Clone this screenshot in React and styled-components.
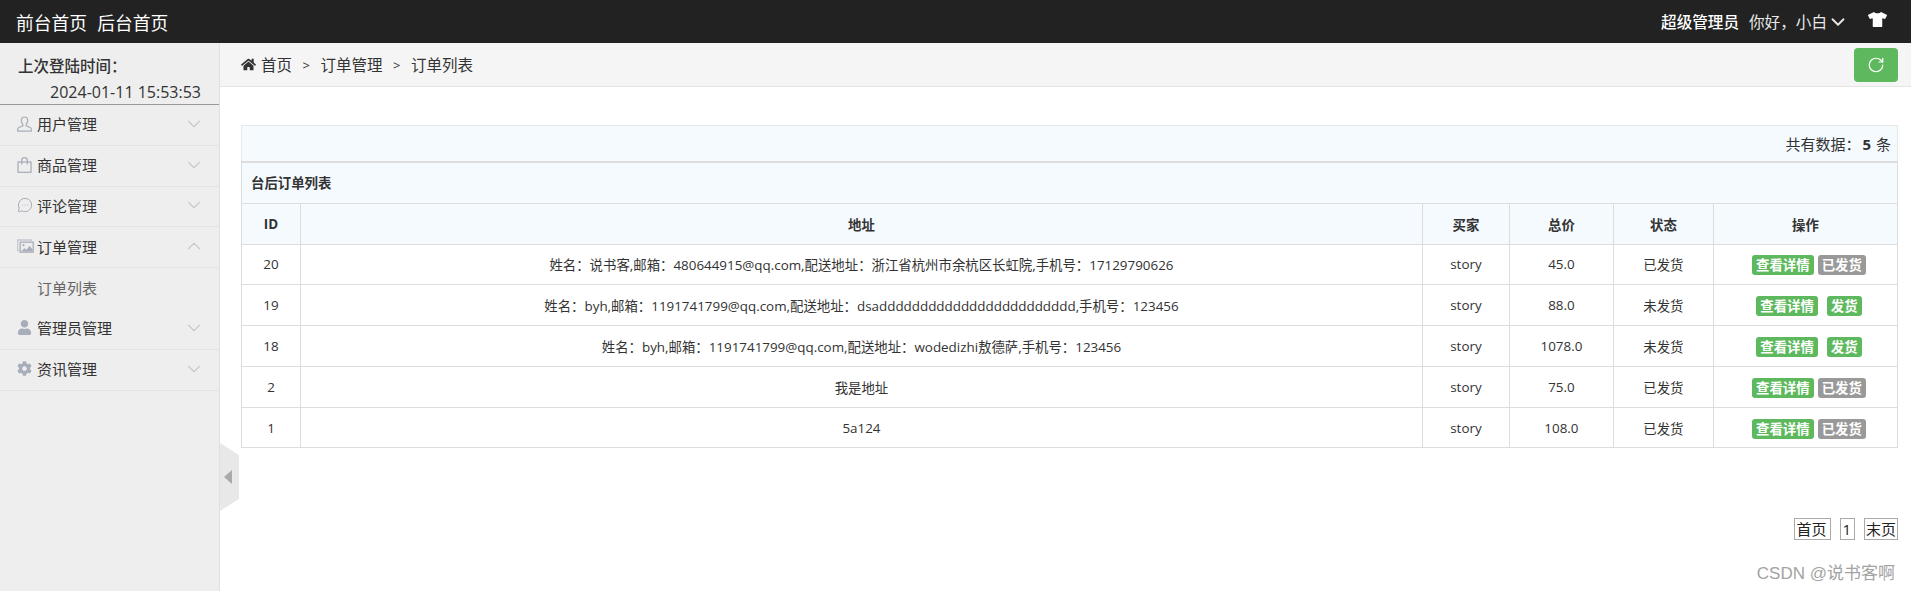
import styled, { createGlobalStyle } from "styled-components";
import { ChevronDown, ChevronUp, MessageCircleMore, RotateCw } from "lucide-react";
import { FaCog, FaHome, FaTshirt, FaUser } from "react-icons/fa";

const GlobalStyle = createGlobalStyle`
  html, body {
    margin: 0;
    padding: 0;
    background: #fff;
    color: #333;
    font-family: "Open Sans", "Noto Sans CJK SC", sans-serif;
    font-size: 13.4px;
  }
  * {
    box-sizing: border-box;
  }
`;

const Page = styled.div`
  position: relative;
  width: 100%;
  height: 591px;
  overflow: hidden;
  display: flex;
  flex-direction: column;
`;

const TopBar = styled.header`
  flex: 0 0 43px;
  display: flex;
  align-items: center;
  justify-content: space-between;
  padding: 0 24px 0 16px;
  background: #222;
  color: #fff;
`;

const TopLinks = styled.nav`
  display: flex;
  gap: 10px;
  font-size: 17.8px;
`;

const TopUser = styled.div`
  display: flex;
  align-items: center;
  font-size: 15.6px;
`;

const Role = styled.span`
  margin-right: 10px;
  font-weight: 500;
`;

const Hello = styled.span`
  color: #e8e8e8;
`;

const UserChevron = styled(ChevronDown)`
  margin: 1px 0 0 0;
  color: #e8e8e8;
`;

const Shirt = styled(FaTshirt)`
  margin: -4px 0 0 19px;
  color: #fff;
`;

const Body = styled.div`
  flex: 1;
  display: flex;
  min-height: 0;
`;

const Sidebar = styled.aside`
  flex: 0 0 220px;
  background: #eee;
  border-right: 1px solid #e0e0e0;
`;

const LoginInfo = styled.div`
  height: 62px;
  padding: 11px 18px 0 18px;
  border-bottom: 1px solid #999;
`;

const LoginLabel = styled.div`
  font-size: 15.5px;
  font-weight: 500;
  line-height: 25px;
`;

const LoginTime = styled.div`
  text-align: right;
  font-size: 16px;
  line-height: 26px;
`;

const MenuRow = styled.div`
  height: 40.8px;
  display: flex;
  align-items: center;
  padding: 0 14px 2px 17px;
  border-bottom: 1px solid #e3e3e3;
  font-size: 15px;
  color: #333;
`;

const MenuIcon = styled.span`
  flex: 0 0 20px;
  display: flex;
  align-items: center;
  color: #a8aeb9;
`;

const MenuText = styled.span`
  flex: 1;
`;

const Chevron = styled.span`
  display: flex;
  color: #c8c8c8;
`;

const SubRow = styled.div`
  height: 40.8px;
  padding-left: 37px;
  line-height: 40px;
  font-size: 15px;
  color: #666;
`;

const Collapse = styled.div`
  position: absolute;
  left: 220px;
  top: 443px;
  width: 19px;
  height: 68px;
  display: flex;
  align-items: center;
  justify-content: center;
  background: #e8e8e8;
  clip-path: polygon(0 0, 100% 12px, 100% 56px, 0 100%);

  &::before {
    content: "";
    margin-left: -4px;
    border-style: solid;
    border-width: 7px 8px 7px 0;
    border-color: transparent #aaa transparent transparent;
  }
`;

const Main = styled.main`
  flex: 1;
  min-width: 0;
  display: flex;
  flex-direction: column;
`;

const Breadcrumb = styled.div`
  flex: 0 0 44px;
  display: flex;
  align-items: center;
  justify-content: space-between;
  padding: 0 13px 0 21px;
  background: #f5f5f5;
  border-bottom: 1px solid #e5e5e5;
`;

const Trail = styled.div`
  display: flex;
  align-items: center;
  font-size: 15.5px;
  color: #333;
`;

const HomeIcon = styled(FaHome)`
  margin: -1px 5px 0 0;
  color: #333;
`;

const TrailSep = styled.span`
  margin: 0 10.5px;
  font-size: 13px;
`;

const RefreshButton = styled.button`
  width: 44px;
  height: 34px;
  margin-top: 1px;
  padding: 0;
  display: flex;
  align-items: center;
  justify-content: center;
  border: 0;
  border-radius: 4px;
  background: #5eb95e;
  color: #fff;
`;

const Content = styled.div`
  flex: 1;
  padding: 38px 13px 0 21px;
`;

const SummaryBar = styled.div`
  height: 36px;
  padding-right: 6px;
  display: flex;
  align-items: center;
  justify-content: flex-end;
  background: #f5fafe;
  border: 1px solid #e8e8e8;
  border-bottom: 0;
  font-size: 15px;
`;

const Strong = styled.strong`
  margin: 0 5px 0 2px;
`;

const OrdersTable = styled.table`
  width: 100%;
  table-layout: fixed;
  border-collapse: collapse;
  border: 1px solid #ddd;
`;

const TitleCell = styled.th`
  height: 41px;
  padding: 0 9px 2px;
  text-align: left;
  font-weight: 700;
  background: #f5fafe;
  border: 1px solid #ddd;
  border-top-width: 2px;
`;

const HeadCell = styled.th`
  height: 41px;
  padding: 0;
  text-align: center;
  font-weight: 700;
  background: #f5fafe;
  border: 1px solid #ddd;
`;

const Cell = styled.td`
  height: 40.8px;
  padding: 0;
  text-align: center;
  border: 1px solid #ddd;
`;

const Actions = styled.div`
  display: flex;
  justify-content: center;
  gap: ${(props) => props.$gap}px;
  padding-left: 7px;
  margin-top: 2px;
`;

const Tag = styled.span`
  height: 20px;
  padding: 0 4px;
  border-radius: 3px;
  background: ${(props) => (props.$muted ? "#999" : "#5eb95e")};
  color: #fff;
  font-size: 13.4px;
  font-weight: 700;
  line-height: 20px;
`;

const Pager = styled.div`
  display: flex;
  justify-content: flex-end;
  gap: 9px;
  margin-top: 70px;
`;

const PageLink = styled.a`
  height: 22px;
  padding: 0 ${(props) => props.$extra || 1}px 0 1px;
  border: 1px solid #aaa;
  color: #222;
  font-size: 15px;
  line-height: 20px;
`;

const Watermark = styled.div`
  position: absolute;
  right: 16px;
  bottom: 7px;
  color: #a3a3a3;
  font-family: "Liberation Sans", "Noto Sans CJK SC", sans-serif;
  font-size: 17px;
`;

// outlined head and shoulders
const BustIcon = () => (
  <svg width="15" height="16" viewBox="0 0 15 16" fill="none" stroke="currentColor" strokeWidth="1.2">
    <path d="M7.5 1C5.4 1 4.3 2.6 4.3 4.6c0 1.6.6 3 1.6 3.9v1.3L1.9 11.5c-.8.4-1.2 1-1.2 1.8v1.9h13.6v-1.9c0-.8-.4-1.4-1.2-1.8L9.100 9.800V8.500c1-.9 1.600-2.300 1.600-3.900C10.700 2.600 9.600 1 7.500 1z" />
  </svg>
);

// bag with the handle standing above the body
const BagIcon = () => (
  <svg width="15" height="16" viewBox="0 0 15 16" fill="none" stroke="currentColor" strokeWidth="1.3">
    <rect x="1" y="5" width="13" height="10.300" />
    <path d="M4.700 7.500V3.500a2.800 2.800 0 0 1 5.600 0v4" />
  </svg>
);

// picture frame with a second frame peeking out behind it
const PictureIcon = () => (
  <svg width="17" height="14" viewBox="0 0 17 14" fill="none">
    <path d="M2.500 11.500H.7V1H14v1.500" stroke="#c4c8cf" strokeWidth="1.300" />
    <rect x="3.200" y="3.200" width="13" height="10" stroke="currentColor" strokeWidth="1.300" />
    <circle cx="6.500" cy="6.200" r="1.100" fill="currentColor" />
    <path d="M4 12.500l3.500-3.300 1.800 1.500 3.200-3.700 3 3.200v2.300z" fill="currentColor" />
  </svg>
);

const menu = [
  { label: "用户管理", icon: <BustIcon /> },
  { label: "商品管理", icon: <BagIcon /> },
  { label: "评论管理", icon: <MessageCircleMore size={16} strokeWidth={1.5} /> },
  {
    label: "订单管理",
    icon: <PictureIcon />,
    open: true,
    children: ["订单列表"],
  },
  { label: "管理员管理", icon: <FaUser size={15} /> },
  { label: "资讯管理", icon: <FaCog size={15} /> },
];

const orders = [
  {
    id: 20,
    address: "姓名：说书客,邮箱：480644915@qq.com,配送地址：浙江省杭州市余杭区长虹院,手机号：17129790626",
    total: "45.0",
    shipped: true,
  },
  {
    id: 19,
    address: "姓名：byh,邮箱：1191741799@qq.com,配送地址：dsadddddddddddddddddddddddd,手机号：123456",
    total: "88.0",
    shipped: false,
  },
  {
    id: 18,
    address: "姓名：byh,邮箱：1191741799@qq.com,配送地址：wodedizhi敖德萨,手机号：123456",
    total: "1078.0",
    shipped: false,
  },
  { id: 2, address: "我是地址", total: "75.0", shipped: true },
  { id: 1, address: "5a124", total: "108.0", shipped: true },
];

const columns = [
  { label: "ID", width: 59 },
  { label: "地址" },
  { label: "买家", width: 87 },
  { label: "总价", width: 104 },
  { label: "状态", width: 100 },
  { label: "操作", width: 184 },
];

const App = () => (
  <Page>
    <GlobalStyle />
    <TopBar>
      <TopLinks>
        <span>前台首页</span>
        <span>后台首页</span>
      </TopLinks>
      <TopUser>
        <Role>超级管理员</Role>
        <Hello>你好，小白</Hello>
        <UserChevron size={22} strokeWidth={2} />
        <Shirt size={19} />
      </TopUser>
    </TopBar>
    <Body>
      <Sidebar>
        <LoginInfo>
          <LoginLabel>上次登陆时间：</LoginLabel>
          <LoginTime>2024-01-11 15:53:53</LoginTime>
        </LoginInfo>
        {menu.map((item) => (
          <div key={item.label}>
            <MenuRow>
              <MenuIcon>{item.icon}</MenuIcon>
              <MenuText>{item.label}</MenuText>
              <Chevron>
                {item.open ? (
                  <ChevronUp size={22} strokeWidth={1.2} />
                ) : (
                  <ChevronDown size={22} strokeWidth={1.2} />
                )}
              </Chevron>
            </MenuRow>
            {item.children?.map((child) => (
              <SubRow key={child}>{child}</SubRow>
            ))}
          </div>
        ))}
      </Sidebar>
      <Main>
        <Breadcrumb>
          <Trail>
            <HomeIcon size={15} />
            首页
            <TrailSep>&gt;</TrailSep>
            订单管理
            <TrailSep>&gt;</TrailSep>
            订单列表
          </Trail>
          <RefreshButton type="button" aria-label="刷新">
            <RotateCw size={18} strokeWidth={1.6} />
          </RefreshButton>
        </Breadcrumb>
        <Content>
          <SummaryBar>
            共有数据：<Strong>5</Strong> 条
          </SummaryBar>
          <OrdersTable>
            <colgroup>
              {columns.map((col) => (
                <col key={col.label} style={col.width ? { width: col.width } : undefined} />
              ))}
            </colgroup>
            <thead>
              <tr>
                <TitleCell colSpan={6}>台后订单列表</TitleCell>
              </tr>
              <tr>
                {columns.map((col) => (
                  <HeadCell key={col.label}>{col.label}</HeadCell>
                ))}
              </tr>
            </thead>
            <tbody>
              {orders.map((order) => (
                <tr key={order.id}>
                  <Cell>{order.id}</Cell>
                  <Cell>{order.address}</Cell>
                  <Cell>story</Cell>
                  <Cell>{order.total}</Cell>
                  <Cell>{order.shipped ? "已发货" : "未发货"}</Cell>
                  <Cell>
                    <Actions $gap={order.shipped ? 4 : 9}>
                      <Tag>查看详情</Tag>
                      {order.shipped ? <Tag $muted>已发货</Tag> : <Tag>发货</Tag>}
                    </Actions>
                  </Cell>
                </tr>
              ))}
            </tbody>
          </OrdersTable>
          <Pager>
            <PageLink $extra={4}>首页</PageLink>
            <PageLink $extra={3}>1</PageLink>
            <PageLink>末页</PageLink>
          </Pager>
        </Content>
      </Main>
    </Body>
    <Collapse />
    <Watermark>CSDN @说书客啊</Watermark>
  </Page>
);

export default App;
